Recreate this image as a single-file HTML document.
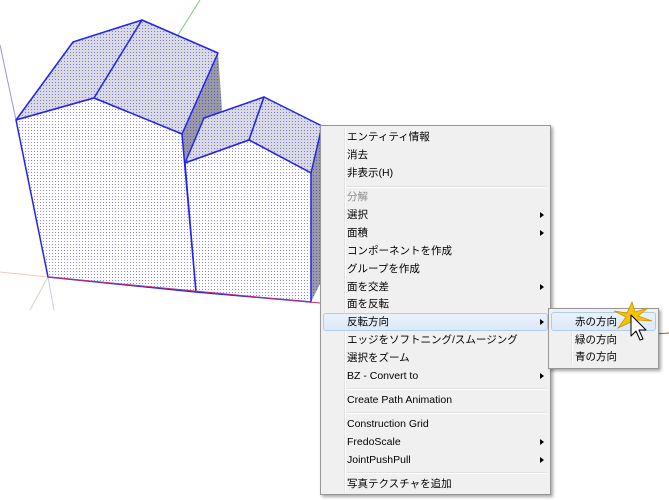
<!DOCTYPE html>
<html><head><meta charset="utf-8"><style>
html,body{margin:0;padding:0;width:669px;height:500px;overflow:hidden;background:#fff;font-family:"Liberation Sans","Noto Sans CJK JP",sans-serif;}
.menu{position:absolute;left:320px;top:125px;width:231px;height:370px;background:#f0f0f0;border:1px solid #979797;box-shadow:2px 2px 3px rgba(0,0,0,.35);box-sizing:border-box;}
.gut{position:absolute;left:23px;top:2px;bottom:2px;width:1px;background:#e2e3e3;border-right:1px solid #fff;}
.it{position:absolute;left:26px;font-size:10.5px;color:#000;line-height:18px;height:18px;white-space:nowrap;}
.dis{color:#8d8d8d;}
.arr{position:absolute;right:6px;width:0;height:0;border-left:4px solid #000;border-top:3.5px solid transparent;border-bottom:3.5px solid transparent;}
.sep{position:absolute;left:26px;right:3px;height:1px;background:#e0e0e0;border-bottom:1px solid #fff;}
.hl{position:absolute;left:2px;right:2px;height:18px;border:1px solid #aeccf0;border-radius:3px;background:linear-gradient(#eaf2fb,#dce9f8);box-sizing:border-box;}
.sub{position:absolute;left:548px;top:308px;width:111px;height:61px;background:#f0f0f0;border:1px solid #979797;box-shadow:2px 2px 3px rgba(0,0,0,.35);box-sizing:border-box;}
</style></head><body>
<svg width="669" height="500" style="position:absolute;left:0;top:0">
<defs>
<pattern id="d" width="3" height="3" patternUnits="userSpaceOnUse"><rect width="3" height="3" fill="#fff"/><rect x="1" y="1" width="1" height="1" fill="#8c8cf0"/></pattern>
<pattern id="g" width="3" height="3" patternUnits="userSpaceOnUse"><rect width="3" height="3" fill="#dadae2"/><rect x="1" y="1" width="1" height="1" fill="#7878e8"/></pattern>
<pattern id="k" width="3" height="3" patternUnits="userSpaceOnUse"><rect width="3" height="3" fill="#9a9aa4"/><rect x="1" y="1" width="1" height="1" fill="#5858c8"/></pattern>
</defs>
<line x1="200" y1="0" x2="178" y2="35" stroke="#7fc87f" stroke-width="1"/>
<line x1="0" y1="45" x2="16" y2="120" stroke="#9a9ad0" stroke-width="1"/>
<line x1="0" y1="272" x2="48" y2="277" stroke="#f0c8c8" stroke-width="1"/>
<line x1="48" y1="277" x2="30" y2="310" stroke="#c0e0c0" stroke-width="1"/>
<line x1="48" y1="277" x2="54" y2="310" stroke="#c8c8e8" stroke-width="1"/>
<polygon points="218,53 222,110 185,162 182,134" fill="url(#k)"/>
<polygon points="16,120 73,42 142,20 94,98" fill="url(#g)" stroke="#2424f0" stroke-width="1.5" stroke-linejoin="round"/>
<polygon points="94,98 142,20 218,53 182,134" fill="url(#g)" stroke="#2424f0" stroke-width="1.5" stroke-linejoin="round"/>
<polygon points="16,120 94,98 182,134 196,292 48,277" fill="url(#d)" stroke="#2424f0" stroke-width="1.5" stroke-linejoin="round"/>
<polygon points="320,126 322,280 311,302 311,173" fill="url(#k)"/>
<polygon points="185,163 204,118 264,97 249,140" fill="url(#g)" stroke="#2424f0" stroke-width="1.5" stroke-linejoin="round"/>
<polygon points="249,140 264,97 322,126 311,173" fill="url(#g)" stroke="#2424f0" stroke-width="1.5" stroke-linejoin="round"/>
<polygon points="185,163 249,140 311,173 311,302 196,292" fill="url(#d)" stroke="#2424f0" stroke-width="1.5" stroke-linejoin="round"/>
<line x1="48" y1="277" x2="320" y2="303" stroke="#c03070" stroke-width="1"/>
<line x1="655" y1="334" x2="669" y2="333" stroke="#d04040" stroke-width="1"/>
</svg>
<div class="menu">
<div class="gut"></div>
<div class="it" style="top:2px">エンティティ情報</div>
<div class="it" style="top:20px">消去</div>
<div class="it" style="top:38px">非表示(H)</div>
<div class="sep" style="top:60px"></div>
<div class="it dis" style="top:62px">分解</div>
<div class="it" style="top:80px">選択</div><div class="arr" style="top:86px"></div>
<div class="it" style="top:98px">面積</div><div class="arr" style="top:104px"></div>
<div class="it" style="top:116px">コンポーネントを作成</div>
<div class="it" style="top:134px">グループを作成</div>
<div class="it" style="top:152px">面を交差</div><div class="arr" style="top:158px"></div>
<div class="it" style="top:169px">面を反転</div>
<div class="hl" style="top:187px"></div>
<div class="it" style="top:187px">反転方向</div><div class="arr" style="top:193px"></div>
<div class="it" style="top:205px">エッジをソフトニング/スムージング</div>
<div class="it" style="top:223px">選択をズーム</div>
<div class="it" style="top:241px">BZ - Convert to</div><div class="arr" style="top:247px"></div>
<div class="sep" style="top:262px"></div>
<div class="it" style="top:265px">Create Path Animation</div>
<div class="sep" style="top:286px"></div>
<div class="it" style="top:289px">Construction Grid</div>
<div class="it" style="top:307px">FredoScale</div><div class="arr" style="top:313px"></div>
<div class="it" style="top:325px">JointPushPull</div><div class="arr" style="top:331px"></div>
<div class="sep" style="top:346px"></div>
<div class="it" style="top:349px">写真テクスチャを追加</div>
</div>
<div class="sub">
<div class="gut" style="left:22px"></div>
<div class="hl" style="top:3px;height:19px"></div>
<div class="it" style="top:4px">赤の方向</div>
<div class="it" style="top:22px">緑の方向</div>
<div class="it" style="top:39px">青の方向</div>
</div>
<svg width="669" height="500" style="position:absolute;left:0;top:0">
<polygon points="632,302 635,312 648,308 638,316 652,321 637,320 636,333 631,322 618,328 626,317 614,311 627,313" fill="#f5c400" stroke="#d09000" stroke-width="0.8"/>
<path d="M631,315 L631,336 L636,331 L640,340 L643,339 L639,330 L646,330 Z" fill="#fff" stroke="#000" stroke-width="1" stroke-linejoin="round"/>
</svg>
</body></html>
